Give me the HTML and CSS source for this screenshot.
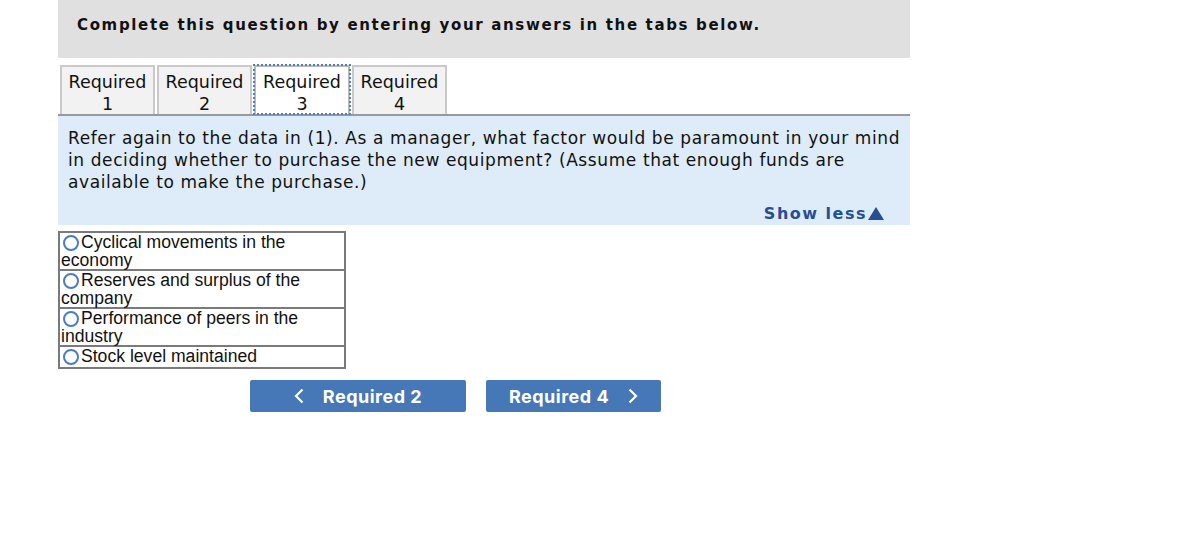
FILE: index.html
```html
<!DOCTYPE html>
<html>
<head>
<meta charset="utf-8">
<link rel="stylesheet" href="styles.css">
</head>
<body>
<div class="wrap">
  <div class="header">Complete this question by entering your answers in the tabs below.</div>
  <div class="tabs">
    <div class="tab">Required<br>1</div>
    <div class="tab">Required<br>2</div>
    <div class="tab active">Required<br>3</div>
    <div class="tab">Required<br>4</div>
  </div>
  <div class="panel">
    <p class="question">Refer again to the data in (1). As a manager, what factor would be paramount in your mind in deciding whether to purchase the new equipment? (Assume that enough funds are available to make the purchase.)</p>
    <div class="showless">Show less<svg class="tri" width="16" height="13" viewBox="0 0 16 13"><path d="M8 0 L16 13 L0 13 Z" fill="#245092"/></svg></div>
  </div>
  <div class="options">
    <div class="opt"><span class="radio"></span>Cyclical movements in the economy</div>
    <div class="opt"><span class="radio"></span>Reserves and surplus of the company</div>
    <div class="opt"><span class="radio"></span>Performance of peers in the industry</div>
    <div class="opt"><span class="radio"></span>Stock level maintained</div>
  </div>
  <div class="nav">
    <button class="btn prev"><svg class="chev" width="10" height="16" viewBox="0 0 10 16"><path d="M8.5 1.5 L2 8 L8.5 14.5" fill="none" stroke="#fff" stroke-width="2.2"/></svg>Required 2</button>
    <button class="btn next">Required 4<svg class="chev" width="10" height="16" viewBox="0 0 10 16"><path d="M1.5 1.5 L8 8 L1.5 14.5" fill="none" stroke="#fff" stroke-width="2.2"/></svg></button>
  </div>
</div>
</body>
</html>
```
FILE: styles.css
```css
html, body { margin: 0; padding: 0; background: #fff; }
.wrap { margin-left: 58px; width: 852px; font-family: "DejaVu Sans", Verdana, sans-serif; color: #111; }
.header { height: 58px; background: #e0e0e0; box-sizing: border-box; padding: 15px 0 0 19px; font-weight: bold; font-size: 15px; line-height: 20px; letter-spacing: 1.65px; }
.tabs { display: flex; gap: 2px; padding-left: 2px; margin-top: 7px; }
.tab { width: 91px; height: 43px; border: 2px solid #c9c9c9; border-bottom: none; background: #f2f2f2; text-align: center; font-size: 17.5px; line-height: 22px; padding-top: 4px; white-space: nowrap; }
.tab.active { width: 92px; background: #fff; border-color: #bbb; outline: 2px dotted #4f7fc0; outline-offset: -1px; }
.panel { border-top: 2px solid #999; background: #deecf9; height: 109px; padding: 0 0 0 10px; }
.question { margin: 0; padding-top: 11px; font-size: 17px; letter-spacing: 0.6px; line-height: 22px; }
.showless { text-align: right; font-weight: bold; font-size: 16px; color: #245092; margin-top: 11px; line-height: 20px; letter-spacing: 1.5px; padding-right: 26px; }
.tri { vertical-align: -1px; margin-left: 1px; }
.options { margin-top: 6px; width: 288px; font-family: "Liberation Sans", Arial, sans-serif; font-size: 17.6px; line-height: 18px; color: #111; }
.opt { border: 2px solid #7a7a7a; margin-top: -2px; padding: 0 0 0 1px; }
.opt:first-child { margin-top: 0; }
.opt:last-child { padding-bottom: 2px; }
.radio { display: inline-block; width: 16px; height: 16px; border: 2px solid #4a7cc4; border-radius: 50%; box-sizing: border-box; vertical-align: -3px; margin: 0 2px 0 2px; }
.nav { display: flex; gap: 20px; margin-top: 11px; padding-left: 192px; }
.btn { height: 32px; border: none; border-radius: 2px; background: #4677b6; color: #fff; font-family: Inter, "Liberation Sans", sans-serif; font-weight: 700; font-size: 18px; letter-spacing: 0.5px; display: flex; align-items: center; justify-content: center; gap: 19px; padding: 0; }
.btn.prev { width: 216px; }
.btn.next { width: 175px; }
```
